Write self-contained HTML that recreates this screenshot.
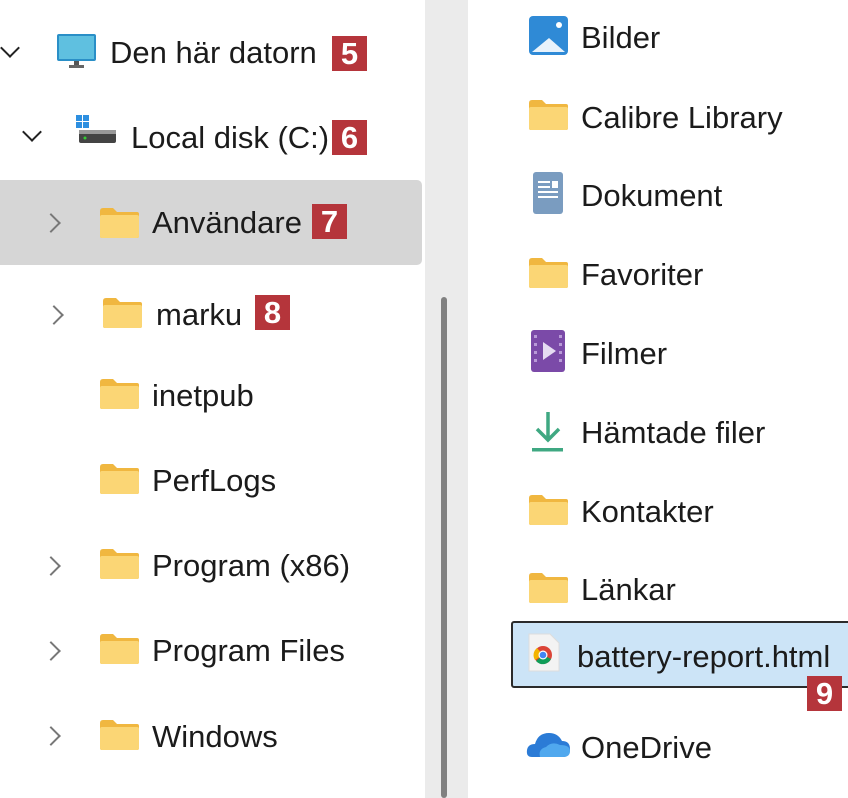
<!DOCTYPE html>
<html><head><meta charset="utf-8"><style>
body{margin:0;width:848px;height:798px;overflow:hidden;background:#fff;font-family:"Liberation Sans",sans-serif;color:#1b1b1b;position:relative}
.a{position:absolute}
.t{position:absolute;font-size:31px;line-height:40px;height:40px;white-space:nowrap}
.b{position:absolute;width:35px;height:35px;background:#b5353b;color:#fff;font-weight:bold;font-size:31px;line-height:36px;text-align:center}
.ch{position:absolute;width:12px;height:12px;border-right:2.5px solid #777;border-bottom:2.5px solid #777}
.r{transform:rotate(-45deg)}
.d{transform:rotate(45deg);border-color:#222}
</style></head><body>
<svg width="0" height="0" style="position:absolute"><defs>
<g id="f"><path d="M0 3 Q0 0 3 0 H13 L17 4 H37 Q39 4 39 6 V28 Q39 30 37 30 H2 Q0 30 0 28 Z" fill="#f0b740"/><rect x="0" y="7" width="39" height="23" rx="2" fill="#fbd675"/></g>
</defs></svg>
<div class="a" style="left:0;top:180px;width:422px;height:85px;background:#d6d6d6;border-radius:0 5px 5px 0"></div>
<div class="a" style="left:425px;top:0;width:43px;height:798px;background:#ebebeb"></div>
<div class="a" style="left:441px;top:297px;width:6px;height:501px;background:#808080;border-radius:3px"></div>

<div class="ch d" style="left:3px;top:41px"></div>
<svg class="a" style="left:57px;top:34px" width="40" height="36"><rect x="0" y="0" width="39" height="27" rx="2" fill="#2a8fc7"/><rect x="2" y="2" width="35" height="23" fill="#5fc0e0"/><rect x="17" y="27" width="5" height="5" fill="#555"/><rect x="12" y="31" width="15" height="3" fill="#666"/></svg>
<div class="t" style="left:110px;top:33px">Den här datorn</div>
<div class="b" style="left:332px;top:36px">5</div>

<div class="ch d" style="left:25px;top:125px"></div>
<svg class="a" style="left:76px;top:115px" width="42" height="36"><rect x="0" y="0" width="6" height="6" fill="#2d8fe0"/><rect x="7" y="0" width="6" height="6" fill="#2d8fe0"/><rect x="0" y="7" width="6" height="6" fill="#2d8fe0"/><rect x="7" y="7" width="6" height="6" fill="#2d8fe0"/><rect x="3" y="15" width="37" height="13" rx="2" fill="#444"/><rect x="3" y="15" width="37" height="4" fill="#999"/><circle cx="9" cy="23" r="1.5" fill="#3c3"/></svg>
<div class="t" style="left:131px;top:118px">Local disk (C:)</div>
<div class="b" style="left:332px;top:120px">6</div>

<div class="ch r" style="left:44px;top:216px"></div>
<svg class="a" style="left:100px;top:208px" width="40" height="31"><use href="#f"/></svg>
<div class="t" style="left:152px;top:203px">Användare</div>
<div class="b" style="left:312px;top:204px">7</div>

<div class="ch r" style="left:47px;top:308px"></div>
<svg class="a" style="left:103px;top:298px" width="40" height="31"><use href="#f"/></svg>
<div class="t" style="left:156px;top:295px">marku</div>
<div class="b" style="left:255px;top:295px">8</div>

<svg class="a" style="left:100px;top:379px" width="40" height="31"><use href="#f"/></svg>
<div class="t" style="left:152px;top:376px">inetpub</div>
<svg class="a" style="left:100px;top:464px" width="40" height="31"><use href="#f"/></svg>
<div class="t" style="left:152px;top:461px">PerfLogs</div>
<div class="ch r" style="left:44px;top:559px"></div>
<svg class="a" style="left:100px;top:549px" width="40" height="31"><use href="#f"/></svg>
<div class="t" style="left:152px;top:546px">Program (x86)</div>
<div class="ch r" style="left:44px;top:644px"></div>
<svg class="a" style="left:100px;top:634px" width="40" height="31"><use href="#f"/></svg>
<div class="t" style="left:152px;top:631px">Program Files</div>
<div class="ch r" style="left:44px;top:729px"></div>
<svg class="a" style="left:100px;top:720px" width="40" height="31"><use href="#f"/></svg>
<div class="t" style="left:152px;top:717px">Windows</div>

<svg class="a" style="left:529px;top:16px" width="40" height="40"><rect width="39" height="39" rx="4" fill="#2f8ad6"/><circle cx="30" cy="9" r="3" fill="#fff"/><path d="M3 36 L20 22 L36 36 Z" fill="#e8f2fb"/></svg>
<div class="t" style="left:581px;top:18px">Bilder</div>
<svg class="a" style="left:529px;top:100px" width="40" height="31"><use href="#f"/></svg>
<div class="t" style="left:581px;top:98px">Calibre Library</div>
<svg class="a" style="left:533px;top:172px" width="32" height="43"><rect width="30" height="42" rx="3" fill="#7a9cc0"/><rect x="5" y="9" width="12" height="2" fill="#fff"/><rect x="5" y="14" width="12" height="2" fill="#fff"/><rect x="5" y="19" width="20" height="2" fill="#fff"/><rect x="5" y="24" width="20" height="2" fill="#fff"/><rect x="19" y="9" width="6" height="7" fill="#fff"/></svg>
<div class="t" style="left:581px;top:176px">Dokument</div>
<svg class="a" style="left:529px;top:258px" width="40" height="31"><use href="#f"/></svg>
<div class="t" style="left:581px;top:255px">Favoriter</div>
<svg class="a" style="left:531px;top:330px" width="36" height="43"><rect width="34" height="42" rx="3" fill="#7b4aa8"/><path d="M12 12 L25 21 L12 30 Z" fill="#e6dcf2"/><g fill="#b99ad8"><rect x="3" y="5" width="3" height="3"/><rect x="3" y="13" width="3" height="3"/><rect x="3" y="21" width="3" height="3"/><rect x="3" y="29" width="3" height="3"/><rect x="28" y="5" width="3" height="3"/><rect x="28" y="13" width="3" height="3"/><rect x="28" y="21" width="3" height="3"/><rect x="28" y="29" width="3" height="3"/></g></svg>
<div class="t" style="left:581px;top:334px">Filmer</div>
<svg class="a" style="left:532px;top:410px" width="34" height="44"><path d="M16 2 V30 M5 19 L16 30 L27 19" stroke="#3fa882" stroke-width="3.5" fill="none"/><rect x="0" y="38" width="31" height="3.5" fill="#3fa882"/></svg>
<div class="t" style="left:581px;top:413px">Hämtade filer</div>
<svg class="a" style="left:529px;top:495px" width="40" height="31"><use href="#f"/></svg>
<div class="t" style="left:581px;top:492px">Kontakter</div>
<svg class="a" style="left:529px;top:573px" width="40" height="31"><use href="#f"/></svg>
<div class="t" style="left:581px;top:570px">Länkar</div>

<div class="a" style="left:511px;top:621px;width:345px;height:63px;background:#cce4f7;border:2px solid #2b2b2b;border-radius:3px"></div>
<svg class="a" style="left:527px;top:633px" width="34" height="40"><path d="M2 1 H23 L32 10 V38 H2 Z" fill="#f3f3f3" stroke="#ddd"/><circle cx="16" cy="22" r="9" fill="#db4437"/><path d="M16 22 L24 26 A9 9 0 0 1 9 28 Z" fill="#0f9d58"/><path d="M16 22 L8 27 A9 9 0 0 1 10 15 Z" fill="#f4b400"/><circle cx="16" cy="22" r="4.5" fill="#fff"/><circle cx="16" cy="22" r="3.3" fill="#4285f4"/></svg>
<div class="t" style="left:577px;top:637px">battery-report.html</div>
<div class="b" style="left:807px;top:676px">9</div>

<svg class="a" style="left:526px;top:729px" width="46" height="30"><path d="M6 28 Q0 28 1 21 Q2 15 9 15 Q12 4 23 4 Q32 4 36 12 Q44 12 44 20 Q44 28 37 28 Z" fill="#2b7bd6"/><path d="M14 28 Q12 20 20 18 Q26 12 34 16 Q44 16 44 22 Q44 28 37 28 Z" fill="#50a8ee"/></svg>
<div class="t" style="left:581px;top:728px">OneDrive</div>
</body></html>
